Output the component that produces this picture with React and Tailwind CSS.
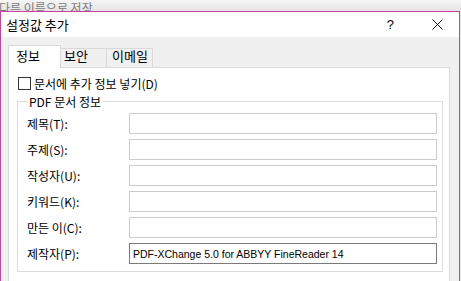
import React from "react";

const rows = [
  { label: "제목(T):", value: "" },
  { label: "주제(S):", value: "" },
  { label: "작성자(U):", value: "" },
  { label: "키워드(K):", value: "" },
  { label: "만든 이(C):", value: "" },
  { label: "제작자(P):", value: "PDF-XChange 5.0 for ABBYY FineReader 14", active: true },
];

export default function App() {
  return (
    <div className="w-[461px] h-[281px] overflow-hidden flex flex-col bg-[#e9e9e9] font-['Noto_Sans_CJK_KR',sans-serif] text-black">
      {/* background strip behind dialog */}
      <div className="h-[11px] shrink-0 overflow-hidden bg-gradient-to-b from-[#f6f6f6] to-[#e4e4e4]">
        <div className="ml-[-1px] text-[12px] leading-[16px] text-[#7a7a7a] whitespace-nowrap">다른 이름으로 저장</div>
      </div>
      <div className="flex-1 flex min-h-0">
        {/* dialog */}
        <div className="w-[460px] shrink-0 flex flex-col border-l border-t border-r border-[#d23c9c] bg-[#f0f0f0]">
          {/* title bar */}
          <div className="h-[25px] shrink-0 bg-white flex items-center">
            <span className="ml-[5px] text-[13px] leading-[18px]">설정값 추가</span>
            <div className="flex-1" />
            <span className="font-['Liberation_Sans',sans-serif] text-[13px] leading-[16px] mr-[38px]">?</span>
            <svg width="11" height="11" viewBox="0 0 11 11" className="mr-[16px]">
              <path d="M0.5 0.5 L10.5 10.5 M10.5 0.5 L0.5 10.5" stroke="#111" strokeWidth="1" fill="none" />
            </svg>
          </div>
          {/* body */}
          <div className="flex-1 min-h-0 pt-[8px] pl-[7px] flex flex-col">
            {/* tabs */}
            <div className="flex items-end h-[22px] shrink-0">
              <div className="relative z-10 w-[53px] h-[23px] -mb-px bg-white border-l border-t border-r border-[#d9d9d9] flex flex-col justify-end pb-[3px] pl-[7px]">
                <span className="text-[13px] leading-[18px]">정보</span>
              </div>
              <div className="w-[46px] h-[19px] bg-[#f0f0f0] border-t border-r border-[#d9d9d9] flex flex-col justify-end pb-[2px] pl-[3px]">
                <span className="text-[13px] leading-[18px]">보안</span>
              </div>
              <div className="w-[46px] h-[19px] bg-[#f0f0f0] border-t border-r border-[#d9d9d9] flex flex-col justify-end pb-[2px] pl-[5px]">
                <span className="text-[13px] leading-[18px]">이메일</span>
              </div>
            </div>
            {/* panel */}
            <div className="w-[442px] flex-1 bg-white border-l border-t border-r border-[#d9d9d9] flex flex-col">
              <div className="mt-[9px] ml-[9px] h-[13px] flex items-center gap-[3px]">
                <div className="w-[13px] h-[13px] border border-[#333333] bg-white" />
                <span className="text-[12px] leading-[13px]">문서에 추가 정보 넣기(D)</span>
              </div>
              <fieldset className="mt-[3px] ml-[8px] w-[426px] border border-[#dcdcdc] pl-[9px] pr-[5px] pt-[3px] pb-[7px]">
                <legend className="ml-[1px] px-[1px] text-[12px] leading-[17px] h-[17px]">PDF 문서 정보</legend>
                <div className="flex flex-col gap-[5px]">
                  {rows.map((r) => (
                    <div key={r.label} className="flex items-center h-[21px]">
                      <div className="w-[102px] text-[12px] leading-[15px]">{r.label}</div>
                      <div
                        className={
                          r.active
                            ? "w-[308px] h-[21px] border border-[#7a7a7a] bg-white flex items-center pl-[3px] font-['Liberation_Sans',sans-serif] text-[10.5px] leading-[14px] whitespace-nowrap"
                            : "w-[308px] h-[21px] border border-[#cccccc] bg-white"
                        }
                      >
                        {r.value}
                      </div>
                    </div>
                  ))}
                </div>
              </fieldset>
            </div>
          </div>
        </div>
        <div className="flex-1 bg-[#eaeaea]" />
      </div>
    </div>
  );
}
